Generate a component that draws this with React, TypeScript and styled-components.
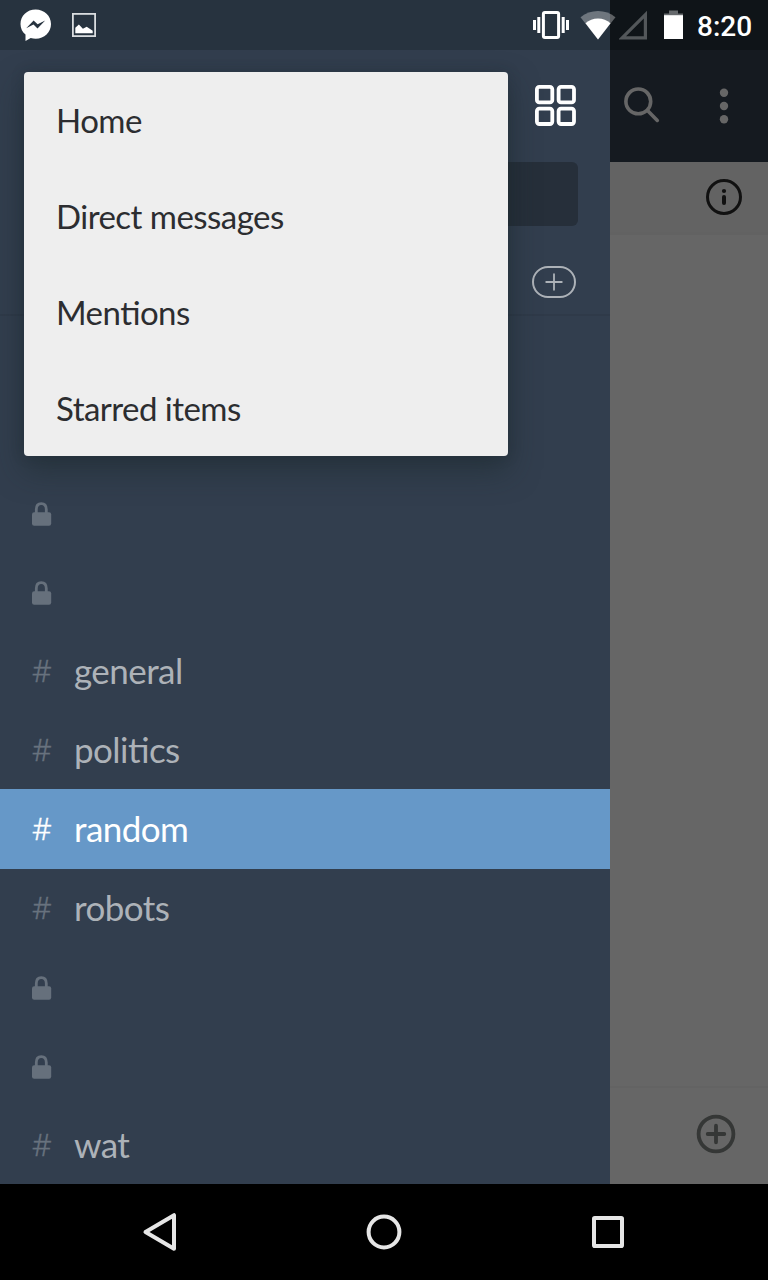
import React from "react";
import styled, { createGlobalStyle } from "styled-components";

const GlobalStyle = createGlobalStyle`
  *, *::before, *::after { box-sizing: border-box; }
  body { margin: 0; background: #000; }
  svg { display: block; flex: none; }
`;

const Screen = styled.div`
  position: relative;
  display: flex;
  flex-direction: column;
  width: 768px;
  height: 1280px;
  overflow: hidden;
  font-family: Lato, Carlito, sans-serif;
`;

const StatusBar = styled.header`
  display: flex;
  align-items: center;
  flex: none;
  height: 50px;
  padding: 0 17px 0 20px;
  background: linear-gradient(to right, #27333f 610px, #0f1418 610px);
`;

const Notifications = styled.div`
  display: flex;
  align-items: center;
  gap: 20px;
  margin-right: auto;
`;

const Indicators = styled.div`
  display: flex;
  align-items: center;
`;

const Clock = styled.time`
  width: 54px;
  margin-left: 13px;
  padding-top: 3px;
  color: #fff;
  font: 500 28px/34px Roboto, sans-serif;
  white-space: nowrap;
`;

const Body = styled.div`
  display: flex;
  flex: none;
  height: 1134px;
`;

const Drawer = styled.aside`
  display: flex;
  flex-direction: column;
  width: 610px;
  background: #323e4e;
`;

const DrawerTop = styled.div`
  display: flex;
  justify-content: flex-end;
  height: 112px;
  padding: 35px 33px 0 0;
`;

const JumpField = styled.div`
  height: 64px;
  margin: 0 32px 0 24px;
  border-radius: 6px;
  background: #262f3a;
`;

const SectionHeader = styled.div`
  display: flex;
  justify-content: flex-end;
  align-items: center;
  height: 90px;
  padding: 24px 34px 0 0;
  border-bottom: 2px solid #2f3a49;
`;

const AddPill = styled.span`
  display: grid;
  place-items: center;
  width: 44px;
  height: 32px;
  border: 2px solid #adb2b8;
  border-radius: 16px;
`;

const ChannelList = styled.ul`
  margin: auto 0 0;
  padding: 0;
  list-style: none;
`;

const ChannelRow = styled.li<{ $active?: boolean }>`
  display: flex;
  align-items: center;
  height: ${(p) => (p.$active ? 80 : 79)}px;
  margin-bottom: ${(p) => (p.$active ? -1 : 0)}px;
  padding: 0 0 ${(p) => (p.$active ? 1 : 0)}px 32px;
  background: ${(p) => (p.$active ? "#6698c8" : "transparent")};
  color: ${(p) => (p.$active ? "#fff" : "#adb2b8")};
`;

const Hash = styled.span<{ $active?: boolean }>`
  width: 42px;
  padding-bottom: 2px;
  color: ${(p) => (p.$active ? "#fff" : "#68727e")};
  font: 300 30.5px/40px "Noto Sans", "Open Sans", sans-serif;
  -webkit-text-stroke: 0.35px currentColor;
`;

const ChannelName = styled.span`
  padding-bottom: 1px;
  font-size: 35px;
  font-feature-settings: "liga" 1;
  letter-spacing: -0.55px;
  line-height: 42px;
`;

const Conversation = styled.main`
  display: flex;
  flex-direction: column;
  flex: 1;
  background: #666;
`;

const Toolbar = styled.div`
  display: flex;
  justify-content: space-between;
  height: 112px;
  padding: 36px 39px 0 13px;
  background: #151a20;
`;

const TopicBar = styled.div`
  display: flex;
  justify-content: flex-end;
  align-items: center;
  height: 73px;
  padding-right: 26px;
  border-bottom: 3px solid #626262;
  background: #636363;
`;

const Composer = styled.div`
  display: flex;
  justify-content: flex-end;
  align-items: center;
  height: 98px;
  margin-top: auto;
  padding: 0 32px 5px 0;
  border-top: 2px solid #636363;
`;

const Menu = styled.ul`
  position: absolute;
  top: 72px;
  left: 24px;
  width: 484px;
  height: 384px;
  margin: 0;
  padding: 0;
  list-style: none;
  border-radius: 4px;
  background: #eee;
  box-shadow: 0 14px 30px rgba(26, 40, 42, 0.5), 0 0 14px rgba(22, 32, 38, 0.2);
`;

const MenuItem = styled.li`
  display: flex;
  align-items: center;
  height: 96px;
  padding: 0 32px;
  color: #2c2d30;
  font-size: 33px;
  font-feature-settings: "liga" 1;
  letter-spacing: -0.53px;
  line-height: 40px;
`;

const NavBar = styled.nav`
  display: flex;
  align-items: center;
  justify-content: center;
  gap: 184px;
  flex: 1;
  background: #000;
`;

const MessengerIcon = () => (
  <svg width="32" height="32" viewBox="0 -.5 32 32">
    <path fill="#fff" d="M15.700 0C7 0 .5 6.400 .5 14.400c0 4.300 1.800 8 5 10.600v6.500l5.200-2.900c1.600.4 3.300.6 5 .6C24.400 29.200 31 22.600 31 14.500S24.400 0 15.700 0Z" />
    <path fill="#27333f" d="M6.200 18.700 13.600 11l4 3.800 7.600-3.900-7.700 8-4-3.900Z" />
  </svg>
);

const PictureIcon = () => (
  <svg width="24" height="24" viewBox="0 0 24 24">
    <rect x=".9" y=".9" width="22.200" height="22.200" fill="none" stroke="#d9dcdf" strokeWidth="1.800" />
    <path fill="#fff" d="M3.300 20.300v-5.500l3.600-3.400 4 4.300 3.800-2 6 4v2.600Z" />
  </svg>
);

const VibrateIcon = () => (
  <svg width="36" height="30" viewBox="0 0 36 30">
    <rect x="10.400" y="2.400" width="15.200" height="25.200" rx="1.500" fill="none" stroke="#fff" strokeWidth="3" />
    <path fill="#fff" d="M0 10h3v10H0ZM4.300 7h3v16h-3ZM28.700 7h3v16h-3ZM33 10h3v10h-3Z" />
  </svg>
);

const IndicatorIcon = styled.svg<{ $gap: number }>`
  margin-left: ${(p) => p.$gap}px;
`;

const WifiIcon = () => (
  <IndicatorIcon $gap={11} width="36" height="30" viewBox="0 0 36 30">
    <path fill="#fff" fillOpacity=".33" d="M18 29.500.5 7.300C5.500 3.200 11.500 1 18 1s12.500 2.200 17.500 6.300Z" />
    <path fill="#fff" d="M18 29.500 5.500 13.300C9 10 13.200 8.400 18 8.400S27 10 30.500 13.300Z" />
  </IndicatorIcon>
);

const SignalIcon = () => (
  <IndicatorIcon $gap={3} width="30" height="30" viewBox="0 0 30 30">
    <path fill="#53575a" fillRule="evenodd" d="M-.8 29.500 28 .8v28.700ZM7 26.300H24.800V8.500Z" />
  </IndicatorIcon>
);

const BatteryIcon = () => (
  <IndicatorIcon $gap={15} width="20" height="30" viewBox="0 0 20 30">
    <path fill="#666a6d" d="M5 .5h9v3h5v3H0v-3h5Z" />
    <path fill="#fff" d="M0 5.200h19V29H0Z" />
  </IndicatorIcon>
);

const TeamsIcon = () => (
  <svg width="42" height="42" viewBox="0 0 42 42" fill="none" stroke="#fff" strokeWidth="3.800">
    {[1.9, 23.6].map((y) =>
      [1.9, 23.6].map((x) => <rect key={`${x}-${y}`} x={x} y={y} width="15.400" height="15.400" rx="2.400" />)
    )}
  </svg>
);

const PlusIcon = () => (
  <svg width="18" height="18" viewBox="0 0 18 18">
    <path d="M9 1.200v15.600M1.200 9h15.600" stroke="#adb2b8" strokeWidth="1.800" strokeLinecap="round" />
  </svg>
);

const LockSvg = styled.svg`
  margin-top: 3px;
`;

const LockIcon = () => (
  <LockSvg width="20" height="24" viewBox="0 0 20 24">
    <path d="M4.300 11V7.500C4.300 3.800 6.300 1.600 9.300 1.600s5 2.200 5 5.900V11" fill="none" stroke="#66707c" strokeWidth="2.800" />
    <rect x="0" y="10.300" width="19.200" height="13.500" rx="2.200" fill="#66707c" />
  </LockSvg>
);

const SearchIcon = () => (
  <svg width="38" height="38" viewBox="0 0 38 38" fill="none" stroke="#666" strokeWidth="3.600">
    <circle cx="15.300" cy="15.400" r="12.400" />
    <path d="m24.500 24.500 9.800 9.900" strokeLinecap="round" />
  </svg>
);

const OverflowIcon = () => (
  <svg width="10" height="38" viewBox="0 0 10 38" fill="#666">
    <circle cx="5" cy="6.700" r="4.200" />
    <circle cx="5" cy="20" r="4.200" />
    <circle cx="5" cy="33.300" r="4.200" />
  </svg>
);

const InfoIcon = () => (
  <svg width="36" height="36" viewBox="0 0 36 36">
    <circle cx="18" cy="18" r="16.500" fill="none" stroke="#111" strokeWidth="3" />
    <circle cx="18" cy="12" r="2.100" fill="#111" />
    <path d="M18 18v6" stroke="#111" strokeWidth="4" strokeLinecap="round" />
  </svg>
);

const AttachIcon = () => (
  <svg width="40" height="40" viewBox="0 0 40 40" fill="none" stroke="#353736" strokeWidth="3.800">
    <circle cx="20" cy="20" r="17.400" />
    <path d="M20 11.700v16.600M11.700 20h16.600" strokeLinecap="round" />
  </svg>
);

const BackIcon = () => (
  <svg width="40" height="40" viewBox="0 0 40 40">
    <path d="M34 3.200v33.600L5.500 20Z" fill="none" stroke="#e6e6e6" strokeWidth="4" strokeLinejoin="round" />
  </svg>
);

const HomeIcon = () => (
  <svg width="40" height="40" viewBox="0 0 40 40">
    <circle cx="20" cy="20" r="15.400" fill="none" stroke="#e6e6e6" strokeWidth="4" />
  </svg>
);

const RecentsIcon = () => (
  <svg width="40" height="40" viewBox="0 0 40 40">
    <rect x="6" y="6" width="28" height="28" rx=".8" fill="none" stroke="#e6e6e6" strokeWidth="4" />
  </svg>
);

const menuItems = ["Home", "Direct messages", "Mentions", "Starred items"];

type Channel = { name?: string; active?: boolean };
const channels: Channel[] = [
  {},
  {},
  { name: "general" },
  { name: "politics" },
  { name: "random", active: true },
  { name: "robots" },
  {},
  {},
  { name: "wat" },
];

export default function App() {
  return (
    <Screen>
      <GlobalStyle />
      <StatusBar>
        <Notifications>
          <MessengerIcon />
          <PictureIcon />
        </Notifications>
        <Indicators>
          <VibrateIcon />
          <WifiIcon />
          <SignalIcon />
          <BatteryIcon />
          <Clock>8:20</Clock>
        </Indicators>
      </StatusBar>
      <Body>
        <Drawer>
          <DrawerTop>
            <TeamsIcon />
          </DrawerTop>
          <JumpField />
          <SectionHeader>
            <AddPill>
              <PlusIcon />
            </AddPill>
          </SectionHeader>
          <ChannelList>
            {channels.map(({ name, active }, i) => (
              <ChannelRow key={i} $active={active}>
                {name ? (
                  <>
                    <Hash $active={active}>#</Hash>
                    <ChannelName>{name}</ChannelName>
                  </>
                ) : (
                  <LockIcon />
                )}
              </ChannelRow>
            ))}
          </ChannelList>
        </Drawer>
        <Conversation>
          <Toolbar>
            <SearchIcon />
            <OverflowIcon />
          </Toolbar>
          <TopicBar>
            <InfoIcon />
          </TopicBar>
          <Composer>
            <AttachIcon />
          </Composer>
        </Conversation>
      </Body>
      <NavBar>
        <BackIcon />
        <HomeIcon />
        <RecentsIcon />
      </NavBar>
      <Menu>
        {menuItems.map((item) => (
          <MenuItem key={item}>{item}</MenuItem>
        ))}
      </Menu>
    </Screen>
  );
}
